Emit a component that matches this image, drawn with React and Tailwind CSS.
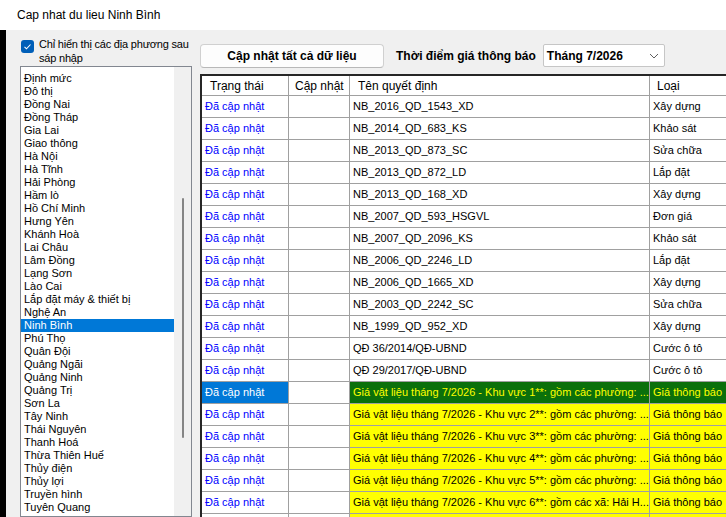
import React from 'react'

const provinces = [
    'Định mức', 'Đô thị', 'Đồng Nai', 'Đồng Tháp', 'Gia Lai', 'Giao thông', 'Hà Nội', 'Hà Tĩnh',
    'Hải Phòng', 'Hầm lò', 'Hồ Chí Minh', 'Hưng Yên', 'Khánh Hoà', 'Lai Châu', 'Lâm Đồng',
    'Lạng Sơn', 'Lào Cai', 'Lắp đặt máy & thiết bị', 'Nghệ An', 'Ninh Bình', 'Phú Thọ', 'Quân Đội',
    'Quảng Ngãi', 'Quảng Ninh', 'Quảng Trị', 'Sơn La', 'Tây Ninh', 'Thái Nguyên', 'Thanh Hoá',
    'Thừa Thiên Huế', 'Thủy điện', 'Thủy lợi', 'Truyền hình', 'Tuyên Quang', 'Văn hóa',
]

const rows = [
    { name: 'NB_2016_QD_1543_XD', type: 'Xây dựng' },
    { name: 'NB_2014_QD_683_KS', type: 'Khảo sát' },
    { name: 'NB_2013_QD_873_SC', type: 'Sửa chữa' },
    { name: 'NB_2013_QD_872_LD', type: 'Lắp đặt' },
    { name: 'NB_2013_QD_168_XD', type: 'Xây dựng' },
    { name: 'NB_2007_QD_593_HSGVL', type: 'Đơn giá' },
    { name: 'NB_2007_QD_2096_KS', type: 'Khảo sát' },
    { name: 'NB_2006_QD_2246_LD', type: 'Lắp đặt' },
    { name: 'NB_2006_QD_1665_XD', type: 'Xây dựng' },
    { name: 'NB_2003_QD_2242_SC', type: 'Sửa chữa' },
    { name: 'NB_1999_QD_952_XD', type: 'Xây dựng' },
    { name: 'QĐ 36/2014/QĐ-UBND', type: 'Cước ô tô' },
    { name: 'QĐ 29/2017/QĐ-UBND', type: 'Cước ô tô' },
    { name: 'Giá vật liệu tháng 7/2026 - Khu vực 1**: gồm các phường: ...', type: 'Giá thông báo', kind: 'selected' },
    { name: 'Giá vật liệu tháng 7/2026 - Khu vực 2**: gồm các phường: ...', type: 'Giá thông báo', kind: 'yellow' },
    { name: 'Giá vật liệu tháng 7/2026 - Khu vực 3**: gồm các phường: ...', type: 'Giá thông báo', kind: 'yellow' },
    { name: 'Giá vật liệu tháng 7/2026 - Khu vực 4**: gồm các phường: ...', type: 'Giá thông báo', kind: 'yellow' },
    { name: 'Giá vật liệu tháng 7/2026 - Khu vực 5**: gồm các phường: ...', type: 'Giá thông báo', kind: 'yellow' },
    { name: 'Giá vật liệu tháng 7/2026 - Khu vực 6**: gồm các xã: Hải H...', type: 'Giá thông báo', kind: 'yellow' },
    { name: 'Giá vật liệu tháng 7/2026 - Khu vực 7**: gồm các xã: ...', type: 'Giá thông báo', kind: 'yellow' },
]

function GridRow({ row }) {
    const selected = row.kind === 'selected'
    const yellow = row.kind === 'yellow'
    const hl = selected
        ? 'bg-[#0b700b] text-[#ffff00]'
        : yellow
            ? 'bg-[#ffff00] text-black'
            : 'bg-white text-black'

    return (
        <div className="flex h-[22px] shrink-0 border-b border-[#a0a0a0]">
            <div
                className={`w-[87px] shrink-0 border-r border-[#a0a0a0] pl-[3px] flex items-center ${
                    selected ? 'bg-[#0078d7] text-white' : 'bg-white text-[#0000ff]'
                }`}
            >
                Đã cập nhật
            </div>
            <div className="w-[61px] shrink-0 border-r border-[#a0a0a0] bg-white"></div>
            <div className={`w-[300px] shrink-0 border-r border-[#a0a0a0] pl-[3px] flex items-center overflow-hidden whitespace-nowrap ${hl}`}>
                {row.name}
            </div>
            <div className={`flex-1 pl-[3px] flex items-center whitespace-nowrap ${hl}`}>{row.type}</div>
        </div>
    )
}

export default function App() {
    return (
        <div
            className="w-[726px] h-[517px] overflow-hidden flex flex-col bg-[#f0f0f0] text-black"
            style={{ fontFamily: '"Liberation Sans", Arial, sans-serif' }}
        >
            {/* title bar */}
            <div className="h-[30px] shrink-0 bg-white flex items-center pl-[17px] text-[12px]">
                Cap nhat du lieu Ninh Bình
            </div>

            <div className="flex flex-1 min-h-0">
                <div className="w-[6px] shrink-0 bg-black"></div>

                {/* left panel */}
                <div className="w-[193px] shrink-0 flex flex-col pl-[14px] pt-[7px]">
                    <div className="flex items-start h-[29px]">
                        <div className="mt-[3px] ml-[1px] w-[13px] h-[13px] shrink-0 rounded-[3px] bg-[#005fb8] flex items-center justify-center">
                            <svg width="9" height="9" viewBox="0 0 9 9">
                                <polyline points="1.5,4.8 3.5,6.8 7.5,2.5" fill="none" stroke="white" strokeWidth="1.1" />
                            </svg>
                        </div>
                        <div className="ml-[5px] text-[11px] tracking-[-0.2px] leading-[14px] whitespace-nowrap">
                            Chỉ hiển thị các địa phương sau<br />sáp nhập
                        </div>
                    </div>

                    <div className="w-[172px] flex-1 border border-[#828790] bg-white flex overflow-hidden">
                        <div className="flex-1 flex flex-col pt-[5px] text-[11px]">
                            {provinces.map((p) => (
                                <div
                                    key={p}
                                    className={`h-[13px] shrink-0 leading-[13px] pl-[3px] whitespace-nowrap ${
                                        p === 'Ninh Bình' ? 'bg-[#0078d7] text-white' : ''
                                    }`}
                                >
                                    {p}
                                </div>
                            ))}
                        </div>
                        <div className="w-[17px] shrink-0 bg-[#f0f0f0] flex justify-center pt-[131px]">
                            <div className="w-[2px] h-[240px] bg-[#858585] rounded-full"></div>
                        </div>
                    </div>
                </div>

                {/* right panel */}
                <div className="flex-1 min-w-0 flex flex-col">
                    <div className="h-[44px] shrink-0 flex items-start pt-[14px] pl-[1px]">
                        <div className="w-[184px] h-[24px] rounded-[4px] border border-[#d0d0d0] border-b-[#b8b8b8] bg-[#fdfdfd] flex items-center justify-center text-[12px] font-bold">
                            Cập nhật tất cả dữ liệu
                        </div>
                        <div className="ml-[12px] h-[24px] flex items-center text-[12px] font-bold">
                            Thời điểm giá thông báo
                        </div>
                        <div className="ml-[7px] w-[122px] h-[23px] rounded-[2px] border border-[#c6c6c6] bg-white flex items-center pl-[3px] text-[12px] font-bold">
                            <span className="flex-1">Tháng 7/2026</span>
                            <svg width="10" height="6" viewBox="0 0 10 6" className="mr-[5px]">
                                <polyline points="1,1 5,5 9,1" fill="none" stroke="#606060" strokeWidth="1" />
                            </svg>
                        </div>
                    </div>

                    {/* grid */}
                    <div className="flex-1 min-h-0 ml-[1px] border-t-2 border-l-2 border-[#262626] bg-white flex flex-col overflow-hidden text-[11px]">
                        <div className="flex h-[20px] shrink-0 border-b border-[#a0a0a0] text-[12px]">
                            <div className="w-[87px] shrink-0 border-r border-[#a0a0a0] pl-[8px] flex items-center">Trạng thái</div>
                            <div className="w-[61px] shrink-0 border-r border-[#a0a0a0] pl-[6px] flex items-center">Cập nhật</div>
                            <div className="w-[300px] shrink-0 border-r border-[#a0a0a0] pl-[8px] flex items-center">Tên quyết định</div>
                            <div className="flex-1 pl-[7px] flex items-center">Loại</div>
                        </div>
                        {rows.map((r, i) => (
                            <GridRow key={i} row={r} />
                        ))}
                    </div>
                </div>
            </div>
        </div>
    )
}
